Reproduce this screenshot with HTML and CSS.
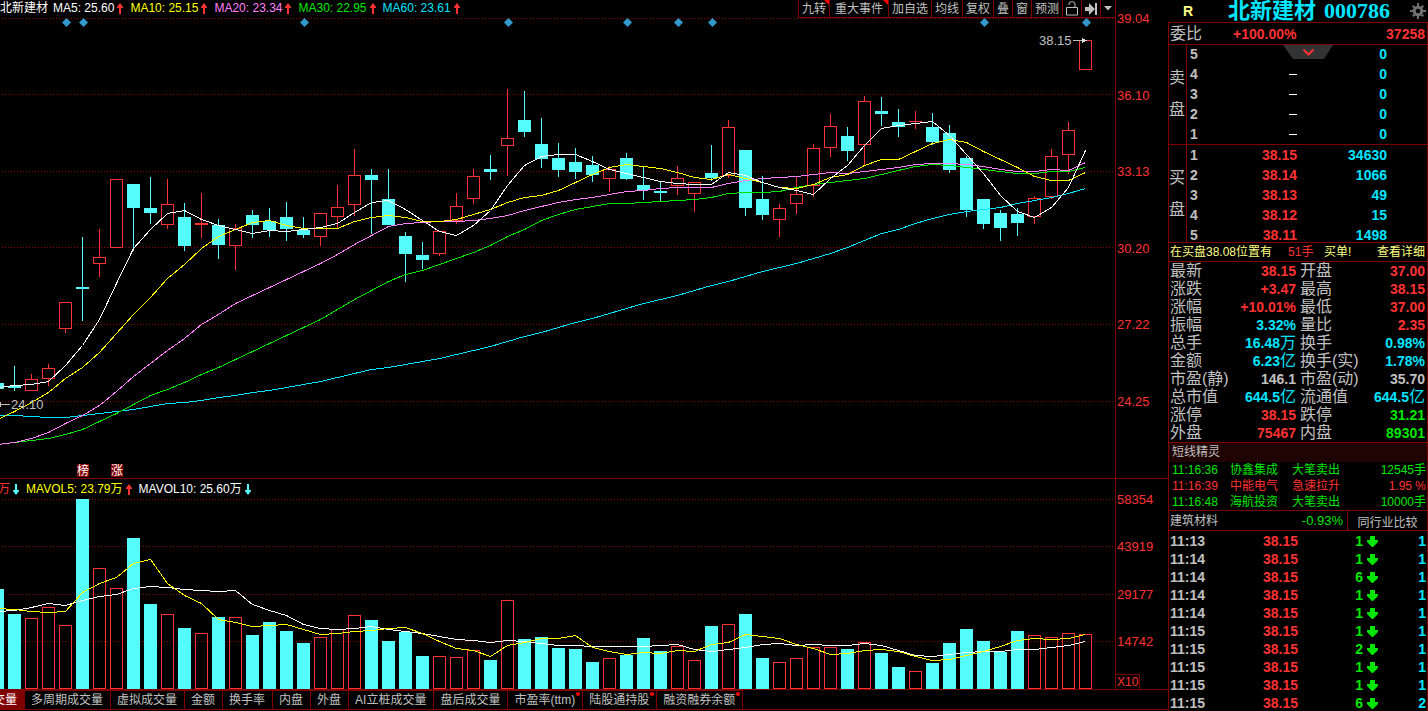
FILE: index.html
```html
<!DOCTYPE html>
<html lang="zh-CN">
<head>
<meta charset="utf-8">
<title>北新建材 000786</title>
<link rel="stylesheet" href="styles.css">
</head>
<body>
<div class="app">
  <main class="charts">
    <section class="panel price-panel">
      <div class="plot">
        <header class="plot-head">
          <div class="legend">
            <span class="name">北新建材</span>
            <span class="ma white">MA5: 25.60<svg class="arrow up" viewBox="0 0 6 11"><path d="M3 0L6 4V5H4V11H2V5H0V4Z"/></svg></span>
            <span class="ma yellow">MA10: 25.15<svg class="arrow up" viewBox="0 0 6 11"><path d="M3 0L6 4V5H4V11H2V5H0V4Z"/></svg></span>
            <span class="ma pink">MA20: 23.34<svg class="arrow up" viewBox="0 0 6 11"><path d="M3 0L6 4V5H4V11H2V5H0V4Z"/></svg></span>
            <span class="ma lime">MA30: 22.95<svg class="arrow up" viewBox="0 0 6 11"><path d="M3 0L6 4V5H4V11H2V5H0V4Z"/></svg></span>
            <span class="ma aqua">MA60: 23.61<svg class="arrow up" viewBox="0 0 6 11"><path d="M3 0L6 4V5H4V11H2V5H0V4Z"/></svg></span>
          </div>
          <nav class="toolbar">
            <button class="flag">九转</button>
            <button class="flag wide">重大事件</button>
            <button>加自选</button>
            <button>均线</button>
            <button>复权</button>
            <button>叠</button>
            <button>窗</button>
            <button>预测</button>
            <button aria-label="解锁"><svg width="12" height="15" viewBox="0 0 12 15"><path d="M.5 6.500H11.500V14H.5ZM3 4V3Q3 .7 5.500 .7H6.500Q9 .7 9 3V6.500" fill="none" stroke="#c0c0c0"/></svg></button>
            <button aria-label="最新"><svg width="12" height="12" viewBox="0 0 12 12"><path d="M0 4H4V0L10 6L4 12V8H0ZM10 0H12V12H10Z" fill="#c0c0c0"/></svg></button>
            <button aria-label="更多"><svg width="8" height="5" viewBox="0 0 8 5"><path d="M0 0H8L4 4.500Z" fill="#c0c0c0"/></svg></button>
          </nav>
        </header>
        <svg class="canvas" id="price" width="1115" height="460" viewBox="0 18 1115 460"></svg>
      </div>
      <div class="axis price-axis">
        <div class="ticks"><span>39.04</span><span>36.10</span><span>33.13</span><span>30.20</span><span>27.22</span><span>24.25</span></div>
      </div>
    </section>
    <section class="panel volume-panel">
      <div class="plot">
        <header class="vol-head">
          <span class="ma red">万<svg class="arrow down" viewBox="0 0 6 11"><path d="M3 11L6 7V6H4V0H2V6H0V7Z"/></svg></span>
          <span class="ma yellow">MAVOL5: 23.79万<svg class="arrow up" viewBox="0 0 6 11"><path d="M3 0L6 4V5H4V11H2V5H0V4Z"/></svg></span>
          <span class="ma white">MAVOL10: 25.60万<svg class="arrow down" viewBox="0 0 6 11"><path d="M3 11L6 7V6H4V0H2V6H0V7Z"/></svg></span>
        </header>
        <svg class="canvas" id="volume" width="1115" height="192" viewBox="0 497 1115 192"></svg>
      </div>
      <div class="axis volume-axis">
        <div class="ticks"><span>58354</span><span>43919</span><span>29177</span><span>14742</span></div>
        <span class="scale">X10</span>
      </div>
    </section>
    <nav class="tabs">
      <button class="active">成交量</button>
      <button>多周期成交量</button>
      <button>虚拟成交量</button>
      <button>金额</button>
      <button>换手率</button>
      <button>内盘</button>
      <button>外盘</button>
      <button>AI立桩成交量</button>
      <button>盘后成交量</button>
      <button class="dot">市盈率(ttm)</button>
      <button class="dot">陆股通持股</button>
      <button class="dot">融资融券余额</button>
    </nav>
  </main>

  <aside class="quote">
    <header class="title">
      <span class="mark">R</span>
      <h1><span>北新建材</span><span class="code">000786</span></h1>
      <button class="gear" aria-label="设置"><svg width="16" height="16" viewBox="0 0 16 16"><g fill="#707070"><path d="M7 0H9V16H7ZM0 7H16V9H0Z"/><path d="M2 3.400L3.400 2L14 12.600L12.600 14ZM12.600 2L14 3.400L3.400 14L2 12.600Z"/></g><circle cx="8" cy="8" r="3.800" fill="none" stroke="#707070" stroke-width="3"/><circle cx="8" cy="8" r="2.300" fill="#000"/></svg></button>
    </header>
    <div class="book">
      <div class="ratio"><span class="label">委比</span><b class="pct">+100.00%</b><b class="diff">37258</b></div>
      <div class="side sell">
        <div class="side-name"><span>卖</span><span>盘</span></div>
        <table>
          <tr><th>5</th><td class="p"></td><td class="q">0</td></tr>
          <tr><th>4</th><td class="p"><i></i></td><td class="q">0</td></tr>
          <tr><th>3</th><td class="p"><i></i></td><td class="q">0</td></tr>
          <tr><th>2</th><td class="p"><i></i></td><td class="q">0</td></tr>
          <tr><th>1</th><td class="p"><i></i></td><td class="q">0</td></tr>
        </table>
        <button class="notch" aria-label="展开"><svg width="50" height="14" viewBox="0 0 50 14"><path d="M0 0H50L41 14H10Z" fill="#333"/><path d="M20.500 4.500L25.500 9.500L30.500 4.500" fill="none" stroke="#ff3232" stroke-width="2"/></svg></button>
      </div>
      <div class="side buy">
        <div class="side-name"><span>买</span><span>盘</span></div>
        <table>
          <tr><th>1</th><td class="p">38.15</td><td class="q">34630</td></tr>
          <tr><th>2</th><td class="p">38.14</td><td class="q">1066</td></tr>
          <tr><th>3</th><td class="p">38.13</td><td class="q">49</td></tr>
          <tr><th>4</th><td class="p">38.12</td><td class="q">15</td></tr>
          <tr><th>5</th><td class="p">38.11</td><td class="q">1498</td></tr>
        </table>
      </div>
      <div class="alert"><span>在买盘38.08位置有</span><span class="hands">51手</span><span>买单!</span><a href="#detail">查看详细</a></div>
      <table class="stats">
        <tr><th>最新</th><td class="red">38.15</td><th>开盘</th><td class="red">37.00</td></tr>
        <tr><th>涨跌</th><td class="red">+3.47</td><th>最高</th><td class="red">38.15</td></tr>
        <tr><th>涨幅</th><td class="red">+10.01%</td><th>最低</th><td class="red">37.00</td></tr>
        <tr><th>振幅</th><td class="aqua">3.32%</td><th>量比</th><td class="red">2.35</td></tr>
        <tr><th>总手</th><td class="aqua">16.48<span>万</span></td><th>换手</th><td class="aqua">0.98%</td></tr>
        <tr><th>金额</th><td class="aqua">6.23<span>亿</span></td><th>换手(实)</th><td class="aqua">1.78%</td></tr>
        <tr><th>市盈(静)</th><td>146.1</td><th>市盈(动)</th><td>35.70</td></tr>
        <tr><th>总市值</th><td class="aqua">644.5<span>亿</span></td><th>流通值</th><td class="aqua">644.5<span>亿</span></td></tr>
        <tr><th>涨停</th><td class="red">38.15</td><th>跌停</th><td class="lime">31.21</td></tr>
        <tr><th>外盘</th><td class="red">75467</td><th>内盘</th><td class="lime">89301</td></tr>
      </table>
      <h2 class="news-title">短线精灵</h2>
      <table class="news">
        <tr class="lime"><td>11:16:36</td><td>协鑫集成</td><td>大笔卖出</td><td>12545手</td></tr>
        <tr class="red"><td>11:16:39</td><td>中能电气</td><td>急速拉升</td><td>1.95 %</td></tr>
        <tr class="lime"><td>11:16:48</td><td>海航投资</td><td>大笔卖出</td><td>10000手</td></tr>
      </table>
      <div class="industry"><span>建筑材料</span><span class="chg lime">-0.93%</span><button>同行业比较</button></div>
      <table class="deals">
        <tr><td>11:13</td><td>38.15</td><td>1</td><td><svg viewBox="0 0 11 11"><path d="M3 0H8V4H11V6L6 11H5L0 6V4H3Z"/></svg></td><td>1</td></tr>
        <tr><td>11:14</td><td>38.15</td><td>1</td><td><svg viewBox="0 0 11 11"><path d="M3 0H8V4H11V6L6 11H5L0 6V4H3Z"/></svg></td><td>1</td></tr>
        <tr><td>11:14</td><td>38.15</td><td>6</td><td><svg viewBox="0 0 11 11"><path d="M3 0H8V4H11V6L6 11H5L0 6V4H3Z"/></svg></td><td>1</td></tr>
        <tr><td>11:14</td><td>38.15</td><td>1</td><td><svg viewBox="0 0 11 11"><path d="M3 0H8V4H11V6L6 11H5L0 6V4H3Z"/></svg></td><td>1</td></tr>
        <tr><td>11:14</td><td>38.15</td><td>1</td><td><svg viewBox="0 0 11 11"><path d="M3 0H8V4H11V6L6 11H5L0 6V4H3Z"/></svg></td><td>1</td></tr>
        <tr><td>11:15</td><td>38.15</td><td>1</td><td><svg viewBox="0 0 11 11"><path d="M3 0H8V4H11V6L6 11H5L0 6V4H3Z"/></svg></td><td>1</td></tr>
        <tr><td>11:15</td><td>38.15</td><td>2</td><td><svg viewBox="0 0 11 11"><path d="M3 0H8V4H11V6L6 11H5L0 6V4H3Z"/></svg></td><td>1</td></tr>
        <tr><td>11:15</td><td>38.15</td><td>1</td><td><svg viewBox="0 0 11 11"><path d="M3 0H8V4H11V6L6 11H5L0 6V4H3Z"/></svg></td><td>1</td></tr>
        <tr><td>11:15</td><td>38.15</td><td>1</td><td><svg viewBox="0 0 11 11"><path d="M3 0H8V4H11V6L6 11H5L0 6V4H3Z"/></svg></td><td>1</td></tr>
        <tr><td>11:15</td><td>38.15</td><td>6</td><td><svg viewBox="0 0 11 11"><path d="M3 0H8V4H11V6L6 11H5L0 6V4H3Z"/></svg></td><td>2</td></tr>
      </table>
    </div>
  </aside>
</div>
<script src="app.js"></script>
</body>
</html>
```

FILE: styles.css
```css
* { box-sizing: border-box; }

body {
  margin: 0;
  background: #000;
  color: #c0c0c0;
  font: 12px/16px "Liberation Sans", "Noto Sans CJK SC", sans-serif;
  overflow: hidden;
}

button {
  margin: 0;
  padding: 0;
  border: 0;
  background: none;
  color: inherit;
  font: inherit;
  white-space: nowrap;
}

table { border-collapse: collapse; border-spacing: 0; }
th, td { padding: 0; }
svg { display: block; }

.white { color: #fff; }
.yellow { color: #ff0; }
.pink { color: #ff80ff; }
.lime { color: #00e600; }
.aqua { color: #00e5ff; }
.red { color: #ff3232; }

.app {
  display: flex;
  height: 100vh;
  overflow: hidden;
}

/* Charts */
.charts {
  flex: 1;
  min-width: 0;
  display: flex;
  flex-direction: column;
}

.panel {
  display: flex;
  border-bottom: 1px solid #800000;
}

.plot {
  flex: 1;
  min-width: 0;
  overflow: hidden;
}

.plot-head {
  display: flex;
  justify-content: space-between;
  height: 18px;
}

.legend, .vol-head {
  display: flex;
  gap: 7px;
}

.name { color: #fff; margin-right: -2px; }

.ma {
  display: flex;
  align-items: center;
  gap: 3px;
  height: 16px;
  white-space: nowrap;
}

.vol-head {
  height: 18px;
  padding-top: 2px;
  margin-left: -2px;
}

.arrow { width: 6px; height: 11px; }
.arrow.up { fill: #ff3232; }
.arrow.down { fill: #54fcfc; }

.toolbar {
  display: flex;
  border-bottom: 1px solid #800000;
}

.toolbar button {
  display: flex;
  align-items: center;
  position: relative;
  padding: 0 3px;
  border-left: 1px solid #800000;
}

.toolbar .wide { padding: 0 5px; }

.flag::after {
  content: "";
  position: absolute;
  top: 0;
  right: 0;
  border-top: 5px solid #f00;
  border-left: 5px solid transparent;
}

.canvas text { font-size: 13px; fill: #c0c0c0; }
.canvas .tag { font-size: 12px; fill: #fff; }

.axis {
  width: 53px;
  border-left: 1px solid #800000;
  color: #ff3232;
  font-size: 13px;
  position: relative;
}

.ticks {
  display: flex;
  flex-direction: column;
  justify-content: space-between;
  padding-left: 1px;
}

.price-axis .ticks { height: 399px; margin-top: 11px; }
.volume-axis .ticks { height: 158px; margin-top: 13px; }

.scale {
  position: absolute;
  left: 0;
  bottom: 0;
  padding: 0 1px;
  border: 1px solid #800000;
  border-left: 0;
  border-bottom: 0;
  line-height: 14px;
  font-size: 12px;
}

.tabs {
  display: flex;
  height: 20px;
  margin-left: -25px;
  border-bottom: 1px solid #800000;
}

.tabs button {
  position: relative;
  padding: 0 7px 0 6px;
  border-top: 1px solid #800000;
  border-right: 1px solid #800000;
}

.tabs .active { background: #800000; color: #fff; }

.tabs .dot::after {
  content: "";
  position: absolute;
  top: 1px;
  right: 2px;
  width: 4px;
  height: 4px;
  border-radius: 50%;
  background: #f00;
}

/* Quote column */
.quote { width: 260px; overflow: hidden; }

.title {
  display: flex;
  align-items: center;
  justify-content: space-between;
  height: 22px;
  padding: 0 2px 0 15px;
}

.mark {
  color: #ffff80;
  font-size: 14px;
  font-weight: bold;
}

.title h1 {
  display: flex;
  gap: 8px;
  margin: 0 0 0 15px;
  color: #00e5ff;
  font: bold 22px/22px "Liberation Serif", "Noto Sans CJK SC", serif;
}

.book {
  border: 1px solid #800000;
  border-bottom: 0;
}

.ratio {
  display: flex;
  height: 21px;
  align-items: center;
  color: #ff3232;
  font-size: 14px;
}

.ratio .label {
  width: 47px;
  padding-left: 1px;
  color: #c0c0c0;
  font-size: 16px;
}

.ratio .pct { flex: 1; padding-left: 17px; }
.ratio .diff { padding-right: 2px; }

.side {
  display: flex;
  position: relative;
  height: 100px;
  border-top: 1px solid #800000;
}

.side.buy { height: 98px; }

.side-name {
  display: flex;
  flex-direction: column;
  gap: 16px;
  width: 18px;
  padding-top: 25px;
  border-right: 1px solid #800000;
  font-size: 16px;
}

.side table {
  flex: 1;
  font-size: 14px;
  font-weight: bold;
}

.side.buy table { margin-bottom: -3px; }
.side tr { height: 19px; }
.side td, .side th { line-height: 19px; }
.side th { width: 20px; padding-left: 3px; text-align: left; }
.side td { text-align: right; }
.side .p { width: 90px; color: #ff3232; }
.side .q { padding-right: 40px; color: #00e5ff; }

.side i {
  display: block;
  width: 8px;
  height: 1px;
  margin-left: auto;
  background: #fff;
}

.notch {
  position: absolute;
  top: 0;
  left: 114px;
}

.alert {
  display: flex;
  height: 20px;
  padding: 0 2px 0 1px;
  border: 1px solid #800000;
  border-width: 1px 0;
  line-height: 18px;
  color: #ffff80;
}

.alert .hands { width: 36px; margin-left: 16px; color: #ff3232; }
.alert a { margin-left: auto; color: inherit; text-decoration: none; }

.stats {
  width: 100%;
  table-layout: fixed;
}

.stats tr { height: 18px; }

.stats th {
  width: 62px;
  padding-left: 1px;
  text-align: left;
  font-size: 16px;
  font-weight: normal;
  line-height: 18px;
  white-space: nowrap;
}

.stats th + td { width: 65px; }
.stats td + th { padding-left: 4px; }

.stats td {
  text-align: right;
  font-size: 14px;
  font-weight: bold;
  line-height: 18px;
  white-space: nowrap;
}

.stats td:last-child { width: auto; padding-right: 2px; }
.stats td span { font-size: 16px; font-weight: normal; }

.news-title {
  margin: 0;
  padding-left: 3px;
  border-top: 1px solid #800000;
  background: #200404;
  font-size: 12px;
  font-weight: normal;
  line-height: 19px;
}

.news { width: 100%; table-layout: fixed; }
.news tr { height: 16px; }
.news td { padding-left: 3px; white-space: nowrap; }
.news td:nth-child(1) { width: 58px; }
.news td:nth-child(2), .news td:nth-child(3) { width: 62px; }
.news td:last-child { padding: 0 1px 0 0; text-align: right; }

.industry {
  display: flex;
  height: 21px;
  padding-left: 1px;
  border: 1px solid #800000;
  border-width: 1px 0;
  line-height: 20px;
}

.industry .chg {
  flex: 1;
  padding-right: 4px;
  font-size: 13px;
  text-align: right;
}

.industry button {
  width: 80px;
  padding-top: 2px;
  border-left: 1px solid #800000;
}

.deals {
  width: 100%;
  table-layout: fixed;
  margin-top: 1px;
  font-size: 14px;
  font-weight: bold;
}

.deals tr { height: 18px; }
.deals td { line-height: 18px; }
.deals td:nth-child(1) { width: 62px; padding-left: 1px; }
.deals td:nth-child(2) { width: 67px; color: #ff3232; text-align: right; }
.deals td:nth-child(3) { width: 65px; color: #00e600; text-align: right; }
.deals td:nth-child(4) { width: 20px; padding-left: 4px; }
.deals td:nth-child(5) { color: #00e5ff; text-align: right; padding-right: 1px; }
.deals svg { width: 11px; height: 11px; fill: #00e600; }
```

FILE: app.js
```js
// Bars are 17 units apart; the first one is partly scrolled out on the left.
const X0 = -3, STEP = 17, RED = '#ff3232', CYAN = '#54fcfc';
const x = i => X0 + i * STEP;

// [high, body top, body bottom, low, rising]
const candles = [
[383,383,389,389,0],[366,386,388,391,0],[374,379,391,391,1],[364,368,379,386,1],[302,302,329,333,1],
[237,287,289,321,0],[229,257,264,277,1],[179,179,248,248,1],[184,184,208,251,0],[177,208,213,224,0],
[179,204,225,229,1],[203,217,246,251,0],[193,223,225,238,1],[219,225,245,259,0],[224,228,246,270,1],
[210,215,225,238,0],[208,221,230,237,0],[202,217,229,241,0],[217,230,235,238,0],[213,213,237,246,1],
[185,207,217,228,1],[149,175,205,216,1],[169,175,180,234,0],[169,199,225,225,0],[232,236,254,282,0],
[242,255,260,269,0],[231,231,254,256,1],[193,206,221,224,1],[169,176,199,204,1],[155,169,172,180,0],
[89,138,146,176,1],[91,120,132,137,0],[118,144,159,168,0],[143,158,170,177,0],[148,162,172,179,0],
[156,165,175,182,0],[166,169,179,192,1],[153,158,179,180,0],[167,185,190,200,0],[181,191,193,202,0],
[166,178,186,195,1],[182,182,194,212,1],[145,173,178,181,0],[120,127,176,178,1],[150,150,208,216,0],
[176,199,215,220,0],[204,208,220,237,1],[177,194,204,214,1],[144,148,186,197,1],[114,126,148,157,1],
[127,136,151,161,0],[96,101,145,166,1],[97,111,114,126,0],[109,122,127,137,0],[111,121,122,129,1],
[113,127,142,145,0],[125,133,170,173,0],[156,158,210,217,0],[199,199,224,229,0],[210,213,228,241,0],
[208,214,223,236,0],[196,198,217,224,1],[149,156,197,199,1],[122,130,155,174,1],[40,40,70,70,1]];

const ma = {
'#ffffff': [387,385,384,381,365,345,319,283,248,229,213,210,219,225,229,233,230,231,229,227,223,212,202,200,209,220,231,235,225,210,185,165,156,154,154,161,169,173,177,181,183,184,184,172,175,182,187,190,194,178,165,145,128,125,123,121,135,154,173,195,211,217,207,187,150],
'#ffff00': [419,411,402,392,378,367,352,333,314,297,278,264,248,236,229,222,220,225,228,228,228,221,217,215,217,221,221,219,214,209,202,197,195,190,182,174,167,164,166,168,172,177,179,174,178,182,187,188,184,177,174,165,159,159,151,143,139,142,151,159,167,176,180,180,172],
'#ff80ff': [444,442,438,432,423,415,405,391,376,363,350,338,324,314,303,295,287,279,271,263,254,244,235,226,223,222,221,221,220,218,215,210,206,202,199,197,194,191,190,188,187,187,187,183,180,178,177,176,174,172,173,171,169,167,164,163,163,164,166,169,171,171,169,170,162],
'#00e600': [444,442,440,438,434,429,421,413,404,395,389,382,374,367,359,351,343,335,327,319,309,299,290,281,274,270,264,258,252,245,236,229,220,214,209,206,203,203,202,201,200,199,197,193,192,192,191,187,184,182,180,178,174,170,166,164,165,167,169,171,173,173,171,171,167],
'#00e5ff': [415,415,416,417,417,415,413,411,409,406,403,402,400,397,395,392,390,387,384,381,377,373,369,367,364,361,358,354,350,346,341,336,332,327,322,318,313,308,303,299,295,290,285,281,276,271,267,263,258,253,247,240,233,229,223,218,214,211,209,207,203,200,197,193,188]
};

const vol = [589,614,-618,-607,-625,499,-568,-588,538,604,-614,628,-633,617,-617,635,622,631,643,-637,-629,-615,620,641,632,656,-656,-657,-650,660,-600,639,637,648,649,662,-658,655,638,651,-646,-660,626,-624,614,658,-662,-658,-647,-647,649,-642,653,667,-671,663,643,629,641,652,631,-635,-637,-633,-634];

const mavol = {
'#ffff00': [608,609,611,612,611,592,583,577,563,559,583,595,603,619,622,626,625,624,629,634,633,631,630,628,627,633,641,648,650,656,645,642,638,638,635,647,651,654,652,653,650,651,644,642,634,636,638,644,648,654,653,650,649,651,656,660,659,655,651,646,640,638,639,638,634],
'#ffffff': [611,610,607,603,605,600,596,594,588,586,587,589,590,591,590,604,610,615,624,628,629,628,626,629,631,633,636,639,640,642,640,641,643,645,645,646,646,646,646,645,644,649,651,649,647,644,643,645,644,645,645,643,645,650,655,656,654,652,651,651,649,649,647,645,641]
};

const rect = (l, t, w, h, c) => `<rect x="${l}" y="${t}" width="${w}" height="${h}" fill="${c}"/>`;
const frame = (l, t, w, h) => `<rect x="${l + .5}" y="${t + .5}" width="${w - 1}" height="${h - 1}" fill="none" stroke="${RED}"/>`;
const grid = ys => ys.map(y => `<path d="M2 ${y + .5}H1115" stroke="#800000" stroke-dasharray="1 2"/>`).join('');
const line = (ys, c) => `<polyline fill="none" stroke="${c}" points="${ys.map((y, i) => `${x(i) + .5},${y + .5}`).join(' ')}"/>`;
const lines = set => Object.entries(set).reverse().map(([c, ys]) => line(ys, c)).join('');

let s = grid([18, 94, 171, 247, 324, 401]);
candles.forEach(([hi, top, bot, low, up], i) => {
  const c = x(i);
  if (!up) s += rect(c, hi, 1, low - hi, CYAN) + rect(c - 6, top, 13, bot - top, CYAN);
  else {
    s += rect(c, hi, 1, top - hi, RED) + rect(c, bot, 1, low - bot, RED);
    s += bot - top < 3 ? rect(c - 6, top, 13, bot - top, RED) : frame(c - 6, top, 13, bot - top);
  }
});
s += lines(ma);
s += [66, 83, 304, 508, 627, 678, 712, 984, 1086].map(c => `<path shape-rendering="auto" fill="#3399cc" d="M${c + .5} 18L${c + 5} 22.500L${c + .5} 27L${c - 4} 22.500Z"/>`).join('');
s += '<path d="M0 404.500H10M.5 402V407" stroke="#c0c0c0"/><text x="11" y="409">24.10</text>';
s += '<path d="M1073 40.500H1086" stroke="#c0c0c0"/><path d="M1082 38L1087 40.500L1082 43Z" fill="#e0e0e0"/><text x="1039" y="45">38.15</text>';
s += [['榜', 77], ['涨', 111]].map(([t, l]) => rect(l, 464, 12, 13, '#800000') + `<text class="tag" x="${l}" y="475">${t}</text>`).join('');
const price = document.getElementById('price');
price.setAttribute('shape-rendering', 'crispEdges');
price.innerHTML = s;

let v = grid([499, 546, 594, 641]);
vol.forEach((y, i) => {
  const l = x(i) - 6;
  v += y > 0 ? rect(l, y, 13, 689 - y, CYAN) : frame(l, -y, 13, 689 + y);
});
v += lines(mavol);
const volume = document.getElementById('volume');
volume.setAttribute('shape-rendering', 'crispEdges');
volume.innerHTML = v;
```
